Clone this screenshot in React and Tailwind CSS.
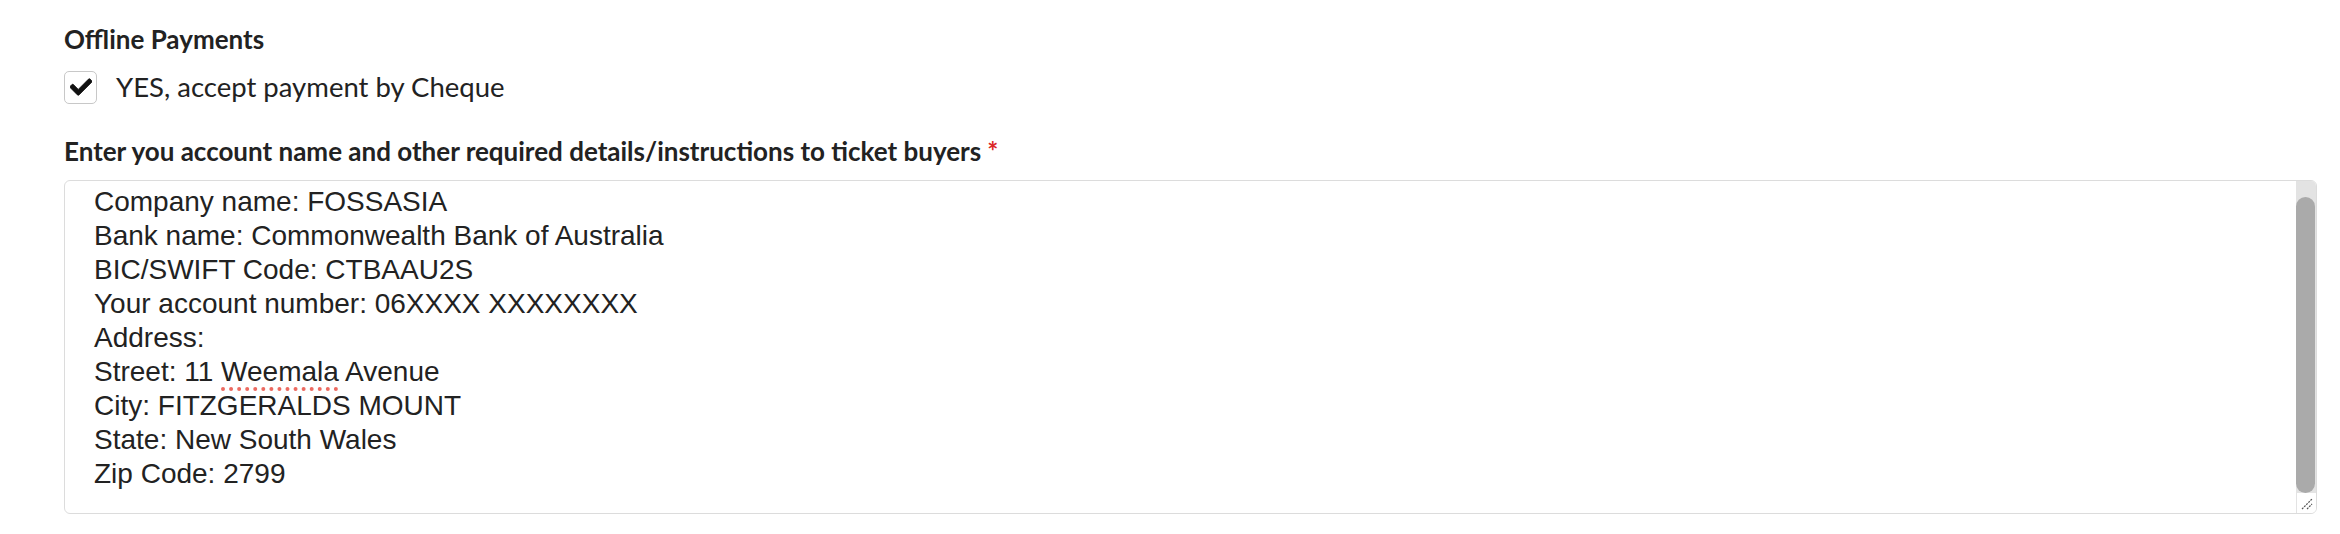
import React from "react";
import { FaCheck } from "react-icons/fa";

const lines = [
  "Company name: FOSSASIA",
  "Bank name: Commonwealth Bank of Australia",
  "BIC/SWIFT Code: CTBAAU2S",
  "Your account number: 06XXXX XXXXXXXX",
  "Address:",
];

export default function App() {
  return (
    <div className="w-[2340px] h-[534px] bg-white pl-[64px] pr-[23px] pt-[22px] font-['Lato',sans-serif] text-[#222222]">
      <div className="text-[26px] leading-[34px] font-bold">Offline Payments</div>
      <div className="flex items-center gap-[19px] mt-[14px] h-[34px]">
        <div className="w-[33px] h-[33px] rounded-[5px] border-[1.5px] border-[#c8c8c8] bg-white flex items-center justify-center">
          <FaCheck className="w-[22px] h-[22px] text-[#111111] stroke-[#111111] stroke-[20]" />
        </div>
        <span className="text-[27.5px] leading-[34px]">YES, accept payment by Cheque</span>
      </div>
      <div className="mt-[30px] text-[26px] leading-[34px] font-bold">
        Enter you account name and other required details/instructions to ticket buyers
        <span className="text-[#db2828] ml-[6px]">*</span>
      </div>
      <div className="mt-[12px] h-[334px] flex border-[1.5px] border-[#dcdcdc] rounded-[6px] overflow-hidden bg-white">
        <div className="flex-1 pl-[29px] pt-[4px] font-['Liberation_Sans',Arial,sans-serif] text-[28px] leading-[34px] text-[#222222]">
          {lines.map((l) => (
            <div key={l}>{l}</div>
          ))}
          <div>
            Street: 11{" "}
            <span className="underline decoration-dotted decoration-[#ec6a60] decoration-[4px] underline-offset-[6px]">
              Weemala
            </span>{" "}
            Avenue
          </div>
          <div>City: FITZGERALDS MOUNT</div>
          <div>State: New South Wales</div>
          <div>Zip Code: 2799</div>
        </div>
        <div className="w-[20px] flex flex-col">
          <div className="flex-1 flex flex-col bg-[#e3e3e3] pt-[16px] pr-[1px]">
            <div className="h-[296px] rounded-full bg-[#aaaaaa]"></div>
          </div>
          <div className="h-[20px] bg-white border-l border-[#e3e3e3] flex items-end justify-end">
            <svg width="14" height="14" viewBox="0 0 14 14" className="mb-[2px] mr-[2px]">
              <line x1="2" y1="12" x2="12" y2="2" stroke="#555" strokeWidth="1.2" strokeDasharray="2 1" />
              <line x1="7" y1="12" x2="12" y2="7" stroke="#555" strokeWidth="1.2" strokeDasharray="2 1" />
            </svg>
          </div>
        </div>
      </div>
    </div>
  );
}
